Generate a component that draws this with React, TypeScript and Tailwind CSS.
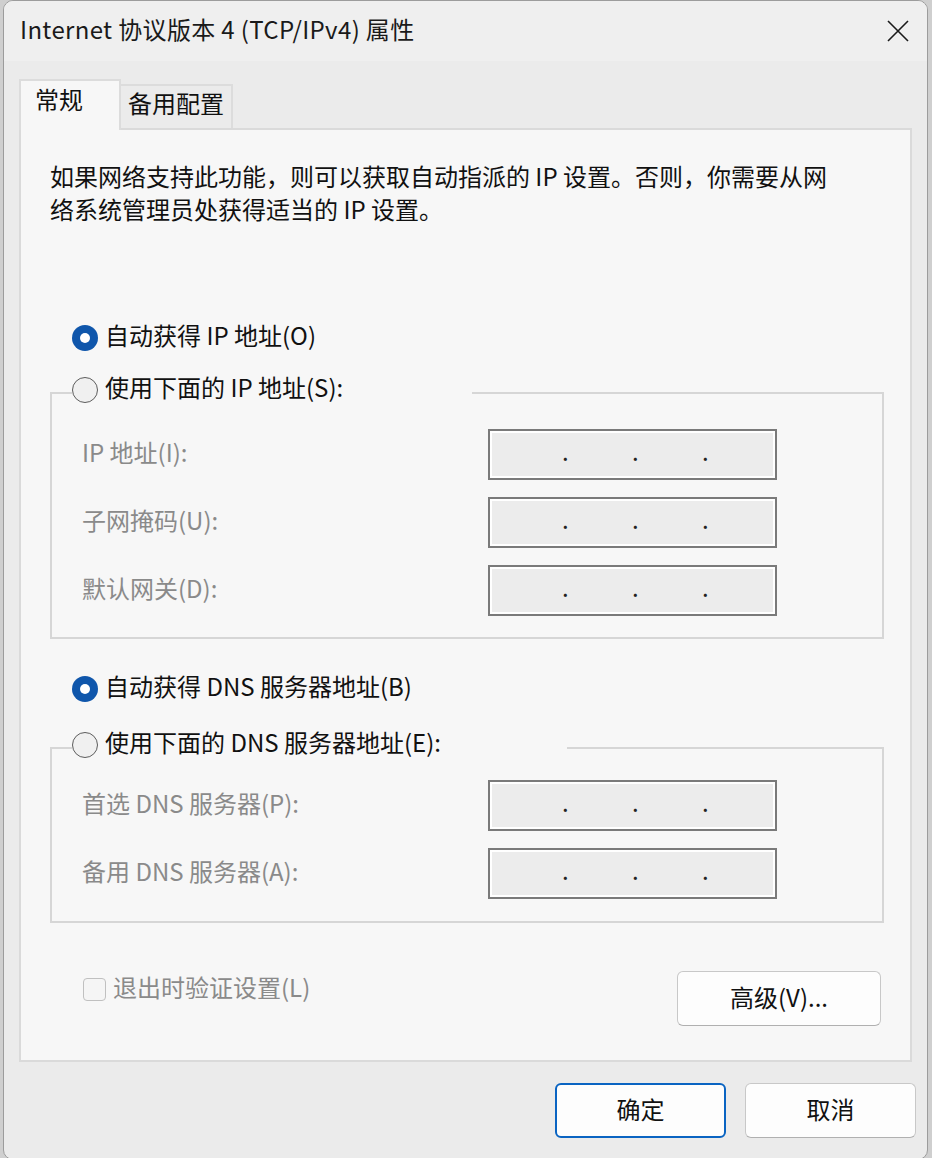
import React from 'react';

const font = "font-['Noto_Sans_CJK_SC','Microsoft_YaHei',sans-serif]";

function Radio({ checked }: { checked?: boolean }) {
  if (checked) {
    return (
      <span className="w-[26px] h-[26px] rounded-full bg-[#0f56ab] flex items-center justify-center shrink-0">
        <span className="w-[10px] h-[10px] rounded-full bg-white" />
      </span>
    );
  }
  return <span className="w-[26px] h-[26px] rounded-full border-[1.5px] border-[#5c5c5c] bg-[#f0f0f0] shrink-0" />;
}

function RadioRow({ checked, label }: { checked?: boolean; label: string }) {
  return (
    <div className="h-[34px] flex items-center gap-[7px] text-[#111]">
      <Radio checked={checked} />
      <span className="pb-[6px]">{label}</span>
    </div>
  );
}

// disabled ip field: sunken border with three dots
function IpBox() {
  return (
    <div className="w-[289px] h-[51px] border-2 border-[#7a7a7a] bg-[#ececec] shadow-[inset_0_0_0_2px_#ffffff] flex items-center pl-[72px] pb-[8px] text-[#222]">
      <span className="w-[70px]">.</span>
      <span className="w-[70px]">.</span>
      <span className="w-[70px]">.</span>
    </div>
  );
}

function FieldRow({ label, first }: { label: string; first?: boolean }) {
  return (
    <div className={`flex items-center pl-[30px] ${first ? '' : 'mt-[17px]'}`}>
      <span className="w-[406px] pb-[6px] text-[#8a8a8a]">{label}</span>
      <IpBox />
    </div>
  );
}

function Group({ legend, legendWidth, rows, pt, pb }: { legend: string; legendWidth: string; rows: string[]; pt: string; pb: string }) {
  return (
    <fieldset className="ml-[29px] w-[834px] border-2 border-[#d6d6d6]">
      <legend className={`ml-[20px] h-[40px] ${legendWidth}`}>
        <RadioRow label={legend} />
      </legend>
      <div className={`${pt} ${pb}`}>
        {rows.map((r, i) => (
          <FieldRow key={r} label={r} first={i === 0} />
        ))}
      </div>
    </fieldset>
  );
}

export default function App() {
  return (
    <div className={`w-[932px] h-[1158px] bg-[#cfcfcf] pl-[3px] overflow-hidden ${font} text-[24px] leading-[32px]`}>
      <div className="w-[925px] h-[1160px] rounded-[10px] border border-[#9c9c9c] bg-[#ebebeb] overflow-hidden flex flex-col">
        {/* title bar */}
        <div className="h-[60px] bg-[#efefef] flex items-center justify-between pl-[16px] pr-[18px] shrink-0">
          <span className="pb-[4px] tracking-[0.35px] text-[#1a1a1a]">Internet 协议版本 4 (TCP/IPv4) 属性</span>
          <svg width="22" height="22" viewBox="0 0 22 22" fill="none" stroke="#1a1a1a" strokeWidth="1.6">
            <path d="M1 1 L21 21 M21 1 L1 21" />
          </svg>
        </div>

        {/* tabs */}
        <div className="ml-[15px] mt-[18px] h-[49px] flex items-start shrink-0">
          <div className="relative z-10 w-[102px] h-[51px] bg-[#f7f7f7] border-2 border-b-0 border-[#dcdcdc] pl-[14px] pt-[2px] text-[#111]">
            常规
          </div>
          <div className="mt-[5px] w-[112px] h-[44px] bg-[#ebebeb] border-2 border-l-0 border-b-0 border-[#dcdcdc] pl-[7px] pt-[1px] text-[#111]">
            备用配置
          </div>
        </div>

        {/* tab page */}
        <div className="ml-[15px] w-[893px] h-[934px] border-2 border-[#dadada] bg-[#f7f7f7] flex flex-col shrink-0">
          <p className="pl-[29px] pt-[29px] pb-[3px] leading-[33px] text-[#111]">
            如果网络支持此功能，则可以获取自动指派的 IP 设置。否则，你需要从网
            <br />
            络系统管理员处获得适当的 IP 设置。
          </p>

          <div className="pl-[51px] mt-[93px]">
            <RadioRow checked label="自动获得 IP 地址(O)" />
          </div>
          <div className="mt-[18px]">
            <Group
              legend="使用下面的 IP 地址(S):"
              legendWidth="w-[400px]"
              rows={['IP 地址(I):', '子网掩码(U):', '默认网关(D):']}
              pt="pt-[16px]"
              pb="pb-[21px]"
            />
          </div>

          <div className="pl-[51px] mt-[33px]">
            <RadioRow checked label="自动获得 DNS 服务器地址(B)" />
          </div>
          <div className="mt-[22px]">
            <Group
              legend="使用下面的 DNS 服务器地址(E):"
              legendWidth="w-[495px]"
              rows={['首选 DNS 服务器(P):', '备用 DNS 服务器(A):']}
              pt="pt-[12px]"
              pb="pb-[22px]"
            />
          </div>

          <div className="mt-[48px] pl-[62px] pr-[29px] flex items-start justify-between">
            <div className="flex items-center gap-[7px]">
              <span className="w-[23px] h-[23px] rounded-[4px] border border-[#c0c0c0] bg-[#f5f5f5]" />
              <span className="pb-[4px] text-[#8a8a8a]">退出时验证设置(L)</span>
            </div>
            <button className="w-[204px] h-[55px] pb-[4px] rounded-[6px] border border-[#c8c8c8] border-b-[#b0b0b0] bg-[#fdfdfd] text-[#111]">
              高级(V)...
            </button>
          </div>
        </div>

        {/* dialog buttons */}
        <div className="mt-[21px] pr-[11px] flex justify-end gap-[19px]">
          <button className="w-[171px] h-[55px] pb-[4px] rounded-[6px] border-2 border-[#0a64c2] bg-[#fdfdfd] text-[#111]">
            确定
          </button>
          <button className="w-[171px] h-[55px] pb-[4px] rounded-[6px] border border-[#c8c8c8] border-b-[#b0b0b0] bg-[#fdfdfd] text-[#111]">
            取消
          </button>
        </div>
      </div>
    </div>
  );
}
